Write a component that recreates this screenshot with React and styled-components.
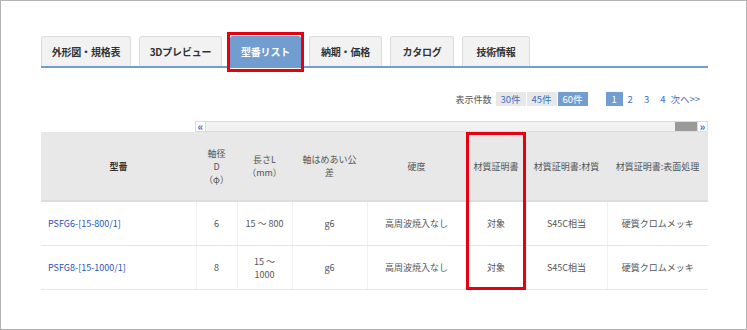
import React from "react";
import styled, { createGlobalStyle } from "styled-components";

const GlobalStyle = createGlobalStyle`
  html, body {
    margin: 0;
    padding: 0;
    background: #ffffff;
  }
  body {
    font-family: "Noto Sans CJK JP", "Noto Sans", sans-serif;
  }
`;

const tabs = [
  { label: "外形図・規格表", width: 90 },
  { label: "3Dプレビュー", width: 83 },
  { label: "型番リスト", width: 71, active: true },
  { label: "納期・価格", width: 73 },
  { label: "カタログ", width: 64 },
  { label: "技術情報", width: 68 },
];

const columns = [
  { key: "model", width: 155, label: "型番", bold: true },
  { key: "d", width: 41, label: ["軸径", "D", "（φ）"] },
  { key: "len", width: 55, label: ["長さL", "（mm）"] },
  { key: "tol", width: 75, label: ["軸はめあい公", "差"] },
  { key: "hard", width: 99, label: "硬度" },
  { key: "cert", width: 60, label: "材質証明書" },
  { key: "mat", width: 81, label: "材質証明書:材質" },
  { key: "surf", width: 101, label: "材質証明書:表面処理" },
];

const rows = [
  {
    model: "PSFG6-[15-800/1]",
    d: "6",
    len: ["15 ～ 800"],
    tol: "g6",
    hard: "高周波焼入なし",
    cert: "対象",
    mat: "S45C相当",
    surf: "硬質クロムメッキ",
  },
  {
    model: "PSFG8-[15-1000/1]",
    d: "8",
    len: ["15 ～", "1000"],
    tol: "g6",
    hard: "高周波焼入なし",
    cert: "対象",
    mat: "S45C相当",
    surf: "硬質クロムメッキ",
  },
];

const App = () => {
  return (
    <>
      <GlobalStyle />
      <Frame>
        <TabBar>
          {tabs.map((t) => (
            <Tab key={t.label} width={t.width} active={t.active}>
              {t.label}
            </Tab>
          ))}
        </TabBar>

        <Toolbar>
          <CountLabel>表示件数</CountLabel>
          <CountGroup>
            <CountButton>30件</CountButton>
            <CountButton>45件</CountButton>
            <CountButton active>60件</CountButton>
          </CountGroup>
          <Pager>
            <PageBox>1</PageBox>
            <PageLink space={5}>2</PageLink>
            <PageLink space={11}>3</PageLink>
            <PageLink space={11}>4</PageLink>
            <PageLink space={5}>次へ&gt;&gt;</PageLink>
          </Pager>
        </Toolbar>

        <ScrollRow>
          <ScrollButton>«</ScrollButton>
          <ScrollTrack>
            <ScrollThumb />
          </ScrollTrack>
          <ScrollButton>»</ScrollButton>
        </ScrollRow>

        <TableWrap>
          <Table>
            <colgroup>
              {columns.map((c) => (
                <col key={c.key} style={{ width: c.width }} />
              ))}
            </colgroup>
            <thead>
              <tr>
                {columns.map((c) => (
                  <Th key={c.key} bold={c.bold}>
                    {Array.isArray(c.label)
                      ? c.label.map((l) => <Line key={l}>{l}</Line>)
                      : c.label}
                  </Th>
                ))}
              </tr>
            </thead>
            <tbody>
              {rows.map((r) => (
                <tr key={r.model}>
                  <Td align="left">
                    <ModelLink>{r.model}</ModelLink>
                  </Td>
                  <Td>{r.d}</Td>
                  <Td>
                    {r.len.map((l) => (
                      <Line key={l}>{l}</Line>
                    ))}
                  </Td>
                  <Td>{r.tol}</Td>
                  <Td>{r.hard}</Td>
                  <Td>{r.cert}</Td>
                  <Td>{r.mat}</Td>
                  <Td>{r.surf}</Td>
                </tr>
              ))}
            </tbody>
          </Table>
          <ColumnMark />
        </TableWrap>
      </Frame>
    </>
  );
};

const Frame = styled.div`
  box-sizing: border-box;
  width: 747px;
  height: 330px;
  border: 1px solid #b3b3b3;
  padding: 35px 38px 0 40px;
  overflow: hidden;
`;

const TabBar = styled.div`
  display: flex;
  gap: 8px;
  height: 30px;
  border-bottom: 2px solid #729dd0;
`;

const Tab = styled.div`
  position: relative;
  box-sizing: border-box;
  width: ${(p) => p.width}px;
  height: 30px;
  display: flex;
  align-items: center;
  justify-content: center;
  border: 1px solid ${(p) => (p.active ? "#729dd0" : "#dcdcdc")};
  border-bottom: none;
  border-radius: 3px 3px 0 0;
  background: ${(p) => (p.active ? "#729dd0" : "#f2f2f2")};
  color: ${(p) => (p.active ? "#ffffff" : "#333333")};
  font-size: 10px;
  font-weight: bold;
  letter-spacing: -0.2px;
  white-space: nowrap;

  &::after {
    content: "";
    display: ${(p) => (p.active ? "block" : "none")};
    position: absolute;
    left: -4px;
    right: -4px;
    top: -5px;
    bottom: -6px;
    border: 3px solid #e60012;
  }
`;

const Toolbar = styled.div`
  display: flex;
  justify-content: flex-end;
  align-items: center;
  height: 14px;
  margin-top: 24px;
  padding-right: 8px;
  font-size: 9.5px;
`;

const CountLabel = styled.span`
  color: #555555;
  margin-right: 4px;
  font-size: 9px;
`;

const CountGroup = styled.div`
  display: flex;
  gap: 1px;
  margin-right: 18px;
`;

const CountButton = styled.span`
  width: 30px;
  height: 14px;
  line-height: 14px;
  text-align: center;
  background: ${(p) => (p.active ? "#729dd0" : "#e8e8e8")};
  color: ${(p) => (p.active ? "#ffffff" : "#3d6fc0")};
`;

const Pager = styled.div`
  display: flex;
  align-items: center;
`;

const PageBox = styled.span`
  width: 17px;
  height: 14px;
  line-height: 14px;
  text-align: center;
  background: #729dd0;
  color: #ffffff;
`;

const PageLink = styled.span`
  color: #3d6fc0;
  margin-left: ${(p) => p.space}px;
`;

const ScrollRow = styled.div`
  display: flex;
  height: 11px;
  margin: 15px 0 0 154px;
`;

const ScrollButton = styled.div`
  box-sizing: border-box;
  width: 11px;
  height: 11px;
  border: 1px solid #dcdcdc;
  background: #ffffff;
  color: #2f6fd6;
  font-size: 11px;
  font-weight: bold;
  line-height: 8px;
  text-align: center;
`;

const ScrollTrack = styled.div`
  flex: 1;
  box-sizing: border-box;
  border-top: 1px solid #dcdcdc;
  border-bottom: 1px solid #dcdcdc;
  background: #f1f1f1;
  display: flex;
  justify-content: flex-end;
`;

const ScrollThumb = styled.div`
  width: 22px;
  background: #9a9a9a;
`;

const TableWrap = styled.div`
  position: relative;
  width: 667px;
`;

const Table = styled.table`
  width: 667px;
  table-layout: fixed;
  border-collapse: collapse;
  font-size: 9px;
  color: #555555;
`;

const Th = styled.th`
  height: 68px;
  padding: 0;
  background: #e8e8e8;
  border-bottom: 2px solid #dddddd;
  font-weight: ${(p) => (p.bold ? "bold" : "normal")};
  color: ${(p) => (p.bold ? "#333333" : "#555555")};
  text-align: center;
  vertical-align: middle;
  white-space: nowrap;
  line-height: 13px;
`;

const Td = styled.td`
  height: 43px;
  padding: 0 0 0 ${(p) => (p.align === "left" ? "7px" : "0")};
  text-align: ${(p) => p.align || "center"};
  vertical-align: middle;
  border-bottom: 1px solid #e6e6e6;
  border-left: 1px solid #f0f0f0;
  line-height: 13px;
  white-space: nowrap;

  &:first-child {
    border-left: none;
  }
`;

const Line = styled.div``;

const ModelLink = styled.span`
  color: #2a52b8;
  font-size: 9px;
`;

const ColumnMark = styled.div`
  position: absolute;
  left: 425px;
  top: 0;
  width: 60px;
  height: 158px;
  box-sizing: border-box;
  border: 3px solid #e60012;
  pointer-events: none;
`;

export default App;
